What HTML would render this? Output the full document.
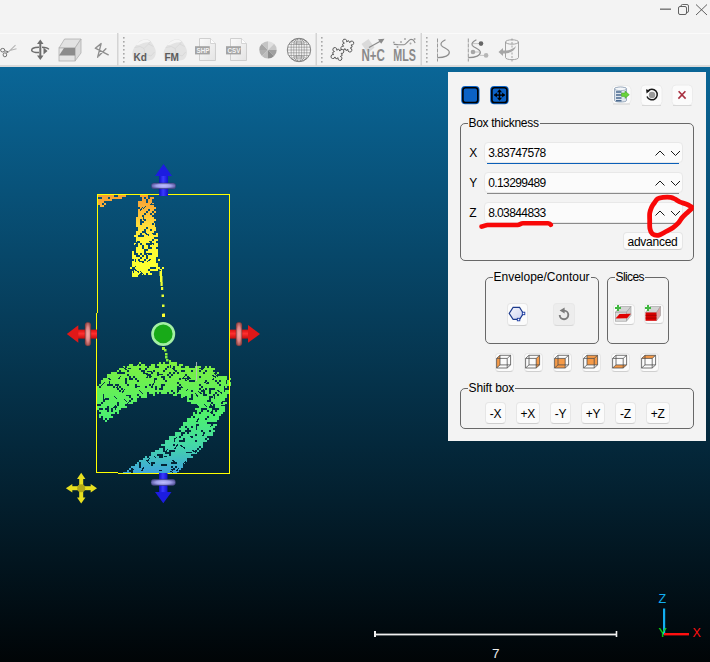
<!DOCTYPE html>
<html><head><meta charset="utf-8">
<style>
*{margin:0;padding:0;box-sizing:border-box}
html,body{width:710px;height:662px;overflow:hidden;font-family:"Liberation Sans",sans-serif;}
body{position:relative;background:#000;}
.abs{position:absolute}
#top{left:0;top:0;width:710px;height:66px;background:#f3f3f3}
#tbline{left:0;top:33px;width:710px;height:1px;background:#fafafa}
#tbbot{left:0;top:65px;width:710px;height:2px;background:#dadada}
#view{left:0;top:67px;width:710px;height:595px;background:linear-gradient(to bottom,#0a6697 0px,#000000 622px)}
.vsep{position:absolute;width:2px;top:33px;height:33px;background:#dadada;border-right:1px solid #fafafa}
.dots{position:absolute;width:2px;top:37px;height:26px;background:repeating-linear-gradient(to bottom,#a0a0a0 0 2px,transparent 2px 4px)}
#panel{left:448px;top:72px;width:258px;height:369px;background:#f3f3f3}
.gb{position:absolute;border:1px solid #686868;border-radius:5px}
.gt{position:absolute;font-size:12px;color:#000;background:#f3f3f3;padding:0 1px;line-height:14px;white-space:nowrap}
.btn{position:absolute;background:#fbfbfb;border:1px solid #e6e6e6;border-bottom-color:#cfcfcf;border-radius:4px}
.inp{position:absolute;left:35px;width:200px;height:21px;background:#fbfbfb;border:1px solid #e8e8e8;border-radius:4px}
.lbl{position:absolute;font-size:12px;color:#000;line-height:14px}
.sb{font-size:12px;color:#000;text-align:center;line-height:22.5px;letter-spacing:-0.2px}
.val{position:absolute;font-size:12px;color:#000;line-height:14px;letter-spacing:-0.45px}
</style></head>
<body>
<div id="top" class="abs"></div>
<div id="tbline" class="abs"></div>
<div id="tbbot" class="abs"></div>
<div id="view" class="abs"></div>
<svg class="abs" style="left:0;top:0" width="710" height="66" viewBox="0 0 710 66">
 <!-- window controls -->
 <rect x="660" y="8.6" width="11" height="1.1" fill="#505050"/>
 <rect x="681" y="4.5" width="7.5" height="8" rx="1.5" fill="none" stroke="#505050" stroke-width="0.85"/>
 <rect x="678.5" y="6.5" width="8" height="8" rx="1.5" fill="#f3f3f3" stroke="#505050" stroke-width="0.9"/>
 <path d="M696 4.5 L707 15 M707 4.5 L696 15" stroke="#505050" stroke-width="0.9"/>
 <!-- separators -->
 <g fill="#d4d4d4">
  <rect x="117" y="33" width="1.5" height="33"/>
  <rect x="315.5" y="33" width="1.5" height="33"/>
  <rect x="420.5" y="33" width="1.5" height="33"/>
 </g>
 <g fill="#a8a8a8">
  <rect x="123" y="37" width="1.6" height="1.6"/><rect x="123" y="41" width="1.6" height="1.6"/><rect x="123" y="45" width="1.6" height="1.6"/><rect x="123" y="49" width="1.6" height="1.6"/><rect x="123" y="53" width="1.6" height="1.6"/><rect x="123" y="57" width="1.6" height="1.6"/><rect x="123" y="61" width="1.6" height="1.6"/>
  <rect x="321" y="37" width="1.6" height="1.6"/><rect x="321" y="41" width="1.6" height="1.6"/><rect x="321" y="45" width="1.6" height="1.6"/><rect x="321" y="49" width="1.6" height="1.6"/><rect x="321" y="53" width="1.6" height="1.6"/><rect x="321" y="57" width="1.6" height="1.6"/><rect x="321" y="61" width="1.6" height="1.6"/>
  <rect x="426" y="37" width="1.6" height="1.6"/><rect x="426" y="41" width="1.6" height="1.6"/><rect x="426" y="45" width="1.6" height="1.6"/><rect x="426" y="49" width="1.6" height="1.6"/><rect x="426" y="53" width="1.6" height="1.6"/><rect x="426" y="57" width="1.6" height="1.6"/><rect x="426" y="61" width="1.6" height="1.6"/>
 </g>
 <!-- scissors -->
 <g fill="none" stroke="#6a6a6a" stroke-width="0.95">
  <ellipse cx="2.7" cy="50.2" rx="2.1" ry="1.8"/>
  <ellipse cx="4.9" cy="54.8" rx="1.8" ry="2"/>
  <path d="M4.8 50.8 L8.5 51.8 M6.2 53 L8.5 51.8"/>
 </g>
 <path d="M8.5 51.8 L15.5 45.2 M9 50.8 L16.5 48.8" stroke="#b4b4b4" stroke-width="1.1" fill="none"/>
 <!-- rotate/move -->
 <g fill="#6e6e6e">
  <rect x="39.3" y="42" width="2" height="16"/>
  <path d="M40.3 39.5 L43.5 44 L37 44 Z"/>
  <path d="M40.3 60 L43.5 55.5 L37 55.5 Z"/>
  <path d="M43.5 47.5 L47.5 51 L43.5 54.5 Z"/>
 </g>
 <path d="M39 47.3 C33 47.5 31.5 48.5 31.7 50.3 C32 52 35 52.5 39 52.5 M42 47.2 C45 47.3 48 48 48.8 49.3" fill="none" stroke="#6e6e6e" stroke-width="1.5"/>
 <!-- box -->
 <g stroke="#b0b0b0" stroke-width="0.8" fill="#dedede">
  <path d="M59 48 L64.6 39 L81 39 L75 48 Z" fill="#e2e2e2"/>
  <path d="M75 48 L81 39 L81 53 L75 61 Z" fill="#dadada"/>
  <rect x="59" y="48" width="16" height="13" fill="#e4e4e4"/>
 </g>
 <path d="M64 48 L75 48 L75 55.6 L59 55.6 Z" fill="#8c8c8c"/>
 <!-- axis icon -->
 <path d="M101.1 43.6 L97.7 57.2 M101.1 43.6 L95.3 48.2 L108.3 54.8 M105.9 48.8 L99 55.7" fill="none" stroke="#8e8e8e" stroke-width="1.4" stroke-linecap="round" stroke-linejoin="round"/>
 <!-- Kd / FM blobs -->
 <g transform="translate(0 0)">
  <path d="M132.5 52.1 C133 49.5 134 47.5 137.6 43.2 C139.5 41.2 141 40.2 142.7 39.8 C144 39.2 145 38.9 146.1 39 C148 39.2 149.3 40 150.3 41.1 C152 43 153 44.5 153.7 45.7 C155 48 155.8 50 155.8 52.1 C155.8 54.5 155.3 56 154.5 57.2 C153.7 58.5 153 59.2 152 59.7 C150.5 60.3 149 60.5 147.8 60.5 L134 60.5 C132.8 58 132.3 55 132.5 52.1 Z" fill="#e3e3e3"/>
  <path d="M136 44.5 C139 41.5 143 39.5 146 39.5 C148 39.8 149.5 40.8 150.5 42 C147 42.5 144 42 141 44 C139 45 137.5 45.5 136 44.5 Z" fill="#f5f5f5"/>
  <path d="M134.5 47.5 L140 46.5 L144 48.5 L148.5 44 L150.5 41.5 M144 48.5 L145 54 L142 57.5 M145 54 L151 56 L154.5 52 M148.5 44 L153.5 46.5" fill="none" stroke="#d2d2d2" stroke-width="0.6"/>
 </g>
 <g transform="translate(31.2 0)">
  <path d="M132.5 52.1 C133 49.5 134 47.5 137.6 43.2 C139.5 41.2 141 40.2 142.7 39.8 C144 39.2 145 38.9 146.1 39 C148 39.2 149.3 40 150.3 41.1 C152 43 153 44.5 153.7 45.7 C155 48 155.8 50 155.8 52.1 C155.8 54.5 155.3 56 154.5 57.2 C153.7 58.5 153 59.2 152 59.7 C150.5 60.3 149 60.5 147.8 60.5 L134 60.5 C132.8 58 132.3 55 132.5 52.1 Z" fill="#e3e3e3"/>
  <path d="M136 44.5 C139 41.5 143 39.5 146 39.5 C148 39.8 149.5 40.8 150.5 42 C147 42.5 144 42 141 44 C139 45 137.5 45.5 136 44.5 Z" fill="#f5f5f5"/>
  <path d="M134.5 47.5 L140 46.5 L144 48.5 L148.5 44 L150.5 41.5 M144 48.5 L145 54 L142 57.5 M145 54 L151 56 L154.5 52 M148.5 44 L153.5 46.5" fill="none" stroke="#d2d2d2" stroke-width="0.6"/>
 </g>
 <text x="133.6" y="60.8" font-family="Liberation Sans" font-weight="bold" font-size="10.6" fill="#5c5c5c" transform="translate(133.6 0) scale(0.95 1) translate(-133.6 0)">Kd</text>
 <text x="164.4" y="60.8" font-family="Liberation Sans" font-weight="bold" font-size="10.6" fill="#5c5c5c" transform="translate(164.4 0) scale(0.95 1) translate(-164.4 0)">FM</text>
 <!-- SHP / CSV -->
 <defs><linearGradient id="docg" x1="0" y1="0" x2="1" y2="1"><stop offset="0" stop-color="#fafafa"/><stop offset="1" stop-color="#e4e4e4"/></linearGradient></defs>
 <g>
  <path d="M199.5 38.5 L210.5 38.5 L215.5 43.5 L215.5 60.5 L199.5 60.5 Z" fill="url(#docg)" stroke="#cbcbcb" stroke-width="0.9"/>
  <path d="M210.5 38.5 L210.5 43.5 L215.5 43.5" fill="#fdfdfd" stroke="#cbcbcb" stroke-width="0.8"/>
  <rect x="195" y="46.2" width="14.8" height="8.2" fill="#a4a4a4"/>
  <text x="196.6" y="53" font-family="Liberation Sans" font-weight="bold" font-size="6.8" fill="#f4f4f4" transform="translate(196.6 0) scale(0.92 1) translate(-196.6 0)">SHP</text>
  <path d="M230.5 38.5 L241.5 38.5 L246.5 43.5 L246.5 60.5 L230.5 60.5 Z" fill="url(#docg)" stroke="#cbcbcb" stroke-width="0.9"/>
  <path d="M241.5 38.5 L241.5 43.5 L246.5 43.5" fill="#fdfdfd" stroke="#cbcbcb" stroke-width="0.8"/>
  <rect x="226" y="46.2" width="15" height="8.2" fill="#a4a4a4"/>
  <text x="227.6" y="53" font-family="Liberation Sans" font-weight="bold" font-size="6.8" fill="#f4f4f4" transform="translate(227.6 0) scale(0.92 1) translate(-227.6 0)">CSV</text>
 </g>
 <!-- disc -->
 <g transform="translate(268 49.9)">
  <path d="M0 0 L0 -8.7 A8.7 8.7 0 0 1 6.15 -6.15 Z" fill="#e0e0e0"/>
  <path d="M0 0 L6.15 -6.15 A8.7 8.7 0 0 1 8.7 0 Z" fill="#c8c8c8"/>
  <path d="M0 0 L8.7 0 A8.7 8.7 0 0 1 6.15 6.15 Z" fill="#a0a0a0"/>
  <path d="M0 0 L6.15 6.15 A8.7 8.7 0 0 1 0 8.7 Z" fill="#8e8e8e"/>
  <path d="M0 0 L0 8.7 A8.7 8.7 0 0 1 -6.15 6.15 Z" fill="#bdbdbd"/>
  <path d="M0 0 L-6.15 6.15 A8.7 8.7 0 0 1 -8.7 0 Z" fill="#b0b0b0"/>
  <path d="M0 0 L-8.7 0 A8.7 8.7 0 0 1 -6.15 -6.15 Z" fill="#a6a6a6"/>
  <path d="M0 0 L-6.15 -6.15 A8.7 8.7 0 0 1 0 -8.7 Z" fill="#c4c4c4"/>
 </g>
 <!-- globe -->
 <defs><clipPath id="gclip"><circle cx="0" cy="0" r="11.7"/></clipPath></defs>
 <g transform="translate(299 50)" fill="none" stroke="#606060">
  <g clip-path="url(#gclip)" stroke-width="0.42"><path d="M-10.33 -5.5L10.33 -5.5M-11.36 -2.8L11.36 -2.8M-11.70 0L11.70 0M-11.36 2.8L11.36 2.8M-10.33 5.5L10.33 5.5M-7.8 -5.5L-7.8 5.5M-5.2 -5.5L-5.2 5.5M-2.6 -5.5L-2.6 5.5M0 -5.5L0 5.5M2.6 -5.5L2.6 5.5M5.2 -5.5L5.2 5.5M7.8 -5.5L7.8 5.5M-2.4 -11.7A2.4 1.8 0 0 0 2.4 -11.7M-2.4 11.7A2.4 1.8 0 0 1 2.4 11.7M-4.4 -11.7A4.4 3.4 0 0 0 4.4 -11.7M-4.4 11.7A4.4 3.4 0 0 1 4.4 11.7M-6.6 -11.7A6.6 4.6 0 0 0 6.6 -11.7M-6.6 11.7A6.6 4.6 0 0 1 6.6 11.7M-8.8 -11.7A8.8 5.8 0 0 0 8.8 -11.7M-8.8 11.7A8.8 5.8 0 0 1 8.8 11.7M-7.8 -5.5Q-8.58 -9 -2.34 -11.7M-7.8 5.5Q-8.58 9 -2.34 11.7M-5.2 -5.5Q-5.72 -9 -1.56 -11.7M-5.2 5.5Q-5.72 9 -1.56 11.7M-2.6 -5.5Q-2.86 -9 -0.78 -11.7M-2.6 5.5Q-2.86 9 -0.78 11.7M2.6 -5.5Q2.86 -9 0.78 -11.7M2.6 5.5Q2.86 9 0.78 11.7M5.2 -5.5Q5.72 -9 1.56 -11.7M5.2 5.5Q5.72 9 1.56 11.7M7.8 -5.5Q8.58 -9 2.34 -11.7M7.8 5.5Q8.58 9 2.34 11.7"/></g>
  <circle r="11.7" stroke-width="0.75"/>
 </g>
 <!-- puzzle -->
 <g fill="#f3f3f3" stroke="#505050" stroke-width="0.85">
  <path d="M-3.6 -3.6 L-1.3 -3.6 A2.0 2.0 0 1 1 1.3 -3.6 L3.6 -3.6 L3.6 -1.3 A2.0 2.0 0 1 1 3.6 1.3 L3.6 3.6 L1.3 3.6 A2.0 2.0 0 1 1 -1.3 3.6 L-3.6 3.6 L-3.6 1.3 A2.0 2.0 0 1 1 -3.6 -1.3 Z" transform="translate(347.3 45.6) rotate(-30)"/>
  <path d="M-3.6 -3.6 L-1.3 -3.6 A2.0 2.0 0 1 1 1.3 -3.6 L3.6 -3.6 L3.6 -1.3 A2.0 2.0 0 1 1 3.6 1.3 L3.6 3.6 L1.3 3.6 A2.0 2.0 0 1 1 -1.3 3.6 L-3.6 3.6 L-3.6 1.3 A2.0 2.0 0 1 1 -3.6 -1.3 Z" transform="translate(337.4 54) rotate(-30)"/>
 </g>
 <!-- N+C -->
 <path d="M361.5 44 L368.5 39 L374.5 47.5 L368 53 Z" fill="#dadada"/>
 <path d="M369 47.5 L382.5 40" stroke="#8a8a8a" stroke-width="1.2"/>
 <path d="M384.5 38.8 L378 39.2 L381.2 43.8 Z" fill="#8a8a8a"/>
 <text x="361.5" y="61.2" font-family="Liberation Sans" font-weight="bold" font-size="16.5" fill="#8a8a8a" transform="translate(361.5 0) scale(0.70 1) translate(-361.5 0)">N+C</text>
 <!-- MLS -->
 <path d="M393.8 44.5 C396 44 397.5 45 399.3 44.8 C401.5 44.6 403 45 404.7 44.4 C406.5 43.5 407.2 42 408.3 41.2 C409.5 40 410 39.4 411 39.4 C412.5 39.4 413.5 40 414 41 C414.5 42 414.8 42.5 415.2 43" fill="none" stroke="#8c8c8c" stroke-width="1.1"/>
 <g fill="#a8a8a8"><circle cx="393.9" cy="42.6" r="1"/><circle cx="397.5" cy="47" r="1"/><circle cx="401" cy="42.1" r="1"/><circle cx="405" cy="38.9" r="1"/><circle cx="410.5" cy="43.5" r="1"/><circle cx="414.6" cy="38.9" r="1"/></g>
 <text x="393.3" y="61.2" font-family="Liberation Sans" font-weight="bold" font-size="16.5" fill="#8a8a8a" transform="translate(393.3 0) scale(0.65 1) translate(-393.3 0)">MLS</text>
 <!-- S curve icon 1 -->
 <path d="M437.5 38.5 L437.5 61.5" stroke="#9a9a9a" stroke-width="1" stroke-dasharray="4 1"/>
 <path d="M445.5 39.8 C442 41.5 440.2 43 441.2 45.2 C442.8 47.8 449 48.8 449.3 52 C449.5 55.5 445 57.6 437.5 57.6" fill="none" stroke="#8e8e8e" stroke-width="1.2"/>
 <!-- S curve icon 2 -->
 <path d="M468.3 38.5 L468.3 61.5" stroke="#9a9a9a" stroke-width="1" stroke-dasharray="4 1"/>
 <path d="M476.4 39.8 C473 41.5 471.2 43 472.2 45.2 C473.8 47.8 480 48.8 480.3 52 C480.5 55.5 476 57.6 468.3 57.6" fill="none" stroke="#8e8e8e" stroke-width="1.2"/>
 <path d="M473 43.6 L481 43.6 M473 52 L480 52 M480 55.4 L486 55.4" stroke="#b0b0b0" stroke-width="0.7"/>
 <circle cx="481" cy="43.6" r="2.3" fill="#666"/>
 <circle cx="473" cy="52" r="2.3" fill="#a6a6a6"/>
 <circle cx="486.1" cy="55.4" r="2.3" fill="#b6b6b6"/>
 <!-- cylinder with arrow -->
 <g fill="none" stroke="#9a9a9a" stroke-width="0.9">
  <ellipse cx="512" cy="42" rx="6.5" ry="2.2"/>
  <path d="M505.5 42 L505.5 57.5 M518.5 42 L518.5 57.5"/>
  <path d="M505.5 57.5 A6.5 2.2 0 0 0 518.5 57.5"/>
  <path d="M512 38.5 L512 61.5" stroke-dasharray="2 1.5"/>
 </g>
 <path d="M498.5 52 L503 48 L503 50.5 C508 50.5 512 50 516 46 C515 51 510 53.5 503 53.5 L503 56 Z" fill="#a6a6a6"/>
</svg>


<!-- CLOUD -->
<svg class="abs" style="left:0;top:67px" width="710" height="595" viewBox="0 67 710 595">
<defs>
<linearGradient id="cm" gradientUnits="userSpaceOnUse" x1="0" y1="195" x2="0" y2="473">
<stop offset="0" stop-color="#f5a032"/>
<stop offset="0.04" stop-color="#fcb038"/>
<stop offset="0.1" stop-color="#ffd83a"/>
<stop offset="0.17" stop-color="#fff838"/>
<stop offset="0.24" stop-color="#ffff30"/>
<stop offset="0.45" stop-color="#d8ff38"/>
<stop offset="0.6" stop-color="#7ef03e"/>
<stop offset="0.8" stop-color="#4cf070"/>
<stop offset="0.9" stop-color="#44d8a8"/>
<stop offset="1" stop-color="#3fa4dc"/>
</linearGradient>
</defs>
<linearGradient id="bgv" gradientUnits="userSpaceOnUse" x1="0" y1="67" x2="0" y2="689"><stop offset="0" stop-color="#0a6697"/><stop offset="1" stop-color="#000"/></linearGradient>
<path fill="url(#cm)" d="M98 195h16v2h-16zM118 195h8v2h-8zM102 197h6v2h-6zM110 197h12v2h-12zM98 199h14v2h-14zM98 201h6v2h-6zM98 203h4v2h-4zM104 203h2v2h-2zM100 205h4v2h-4zM140 195h8v2h-8zM142 197h2v2h-2zM146 197h2v2h-2zM150 197h4v2h-4zM142 199h4v2h-4zM148 199h4v2h-4zM138 201h8v2h-8zM148 201h4v2h-4zM138 203h16v2h-16zM138 205h16v2h-16zM140 207h16v2h-16zM138 209h10v2h-10zM150 209h4v2h-4zM138 211h8v2h-8zM148 211h4v2h-4zM154 211h2v2h-2zM138 213h6v2h-6zM146 213h4v2h-4zM152 213h2v2h-2zM138 215h4v2h-4zM144 215h8v2h-8zM136 217h18v2h-18zM136 219h4v2h-4zM142 219h2v2h-2zM146 219h10v2h-10zM136 221h4v2h-4zM144 221h10v2h-10zM136 223h4v2h-4zM142 223h10v2h-10zM154 223h2v2h-2zM136 225h20v2h-20zM138 227h8v2h-8zM148 227h8v2h-8zM138 229h6v2h-6zM146 229h4v2h-4zM152 229h4v2h-4zM136 231h6v2h-6zM146 231h8v2h-8zM136 233h4v2h-4zM142 233h12v2h-12zM156 233h2v2h-2zM134 235h4v2h-4zM144 235h14v2h-14zM136 237h18v2h-18zM136 239h16v2h-16zM154 239h4v2h-4zM136 241h2v2h-2zM140 241h10v2h-10zM152 241h4v2h-4zM134 243h2v2h-2zM138 243h2v2h-2zM142 243h4v2h-4zM152 243h6v2h-6zM138 245h4v2h-4zM144 245h4v2h-4zM150 245h8v2h-8zM136 247h6v2h-6zM144 247h4v2h-4zM152 247h4v2h-4zM136 249h8v2h-8zM148 249h10v2h-10zM132 251h2v2h-2zM136 251h8v2h-8zM146 251h12v2h-12zM132 253h2v2h-2zM138 253h2v2h-2zM142 253h2v2h-2zM146 253h2v2h-2zM152 253h6v2h-6zM132 255h4v2h-4zM140 255h2v2h-2zM144 255h2v2h-2zM148 255h10v2h-10zM132 257h8v2h-8zM142 257h4v2h-4zM148 257h8v2h-8zM134 259h4v2h-4zM140 259h4v2h-4zM146 259h10v2h-10zM158 259h2v2h-2zM132 261h10v2h-10zM144 261h12v2h-12zM132 263h26v2h-26zM132 265h26v2h-26zM130 267h2v2h-2zM134 267h16v2h-16zM156 267h4v2h-4zM162 267h2v2h-2zM134 269h14v2h-14zM150 269h8v2h-8zM132 271h18v2h-18zM132 273h8v2h-8zM142 273h4v2h-4zM148 273h4v2h-4zM132 275h6v2h-6zM159.5 269h2.5v7h-2.5z M160 276h2.5v6h-2.5z M160.5 282h2.2v4h-2.2z M161 287h2.2v3h-2.2z M161.5 294.5h2.5v2.5h-2.5z M162 304.5h2.5v2.5h-2.5z M162.5 313.5h2.5v2.5h-2.5zM169 360h2v2h-2zM139 362h2v2h-2zM159 362h2v2h-2zM163 362h2v2h-2zM169 362h8v2h-8zM129 364h4v2h-4zM137 364h2v2h-2zM141 364h4v2h-4zM151 364h4v2h-4zM157 364h20v2h-20zM179 364h4v2h-4zM123 366h2v2h-2zM127 366h20v2h-20zM149 366h6v2h-6zM159 366h8v2h-8zM169 366h4v2h-4zM175 366h6v2h-6zM185 366h4v2h-4zM195 366h6v2h-6zM205 366h2v2h-2zM209 366h2v2h-2zM119 368h20v2h-20zM141 368h4v2h-4zM147 368h18v2h-18zM167 368h6v2h-6zM175 368h26v2h-26zM203 368h12v2h-12zM117 370h2v2h-2zM121 370h6v2h-6zM129 370h12v2h-12zM145 370h8v2h-8zM155 370h8v2h-8zM165 370h10v2h-10zM177 370h4v2h-4zM185 370h6v2h-6zM193 370h6v2h-6zM201 370h4v2h-4zM207 370h6v2h-6zM111 372h6v2h-6zM125 372h18v2h-18zM145 372h6v2h-6zM153 372h4v2h-4zM159 372h10v2h-10zM171 372h2v2h-2zM175 372h2v2h-2zM179 372h24v2h-24zM205 372h10v2h-10zM217 372h2v2h-2zM107 374h20v2h-20zM129 374h20v2h-20zM151 374h6v2h-6zM159 374h8v2h-8zM169 374h2v2h-2zM173 374h12v2h-12zM187 374h30v2h-30zM107 376h22v2h-22zM131 376h2v2h-2zM135 376h14v2h-14zM151 376h10v2h-10zM165 376h4v2h-4zM171 376h16v2h-16zM189 376h10v2h-10zM201 376h26v2h-26zM103 378h22v2h-22zM127 378h2v2h-2zM133 378h2v2h-2zM137 378h18v2h-18zM157 378h6v2h-6zM165 378h14v2h-14zM181 378h6v2h-6zM189 378h38v2h-38zM229 378h2v2h-2zM101 380h24v2h-24zM127 380h10v2h-10zM139 380h26v2h-26zM167 380h22v2h-22zM195 380h10v2h-10zM207 380h8v2h-8zM217 380h2v2h-2zM221 380h8v2h-8zM101 382h24v2h-24zM127 382h50v2h-50zM179 382h28v2h-28zM209 382h8v2h-8zM219 382h12v2h-12zM99 384h8v2h-8zM113 384h2v2h-2zM119 384h8v2h-8zM129 384h6v2h-6zM137 384h12v2h-12zM151 384h10v2h-10zM165 384h14v2h-14zM181 384h18v2h-18zM201 384h18v2h-18zM221 384h10v2h-10zM97 386h2v2h-2zM101 386h12v2h-12zM115 386h4v2h-4zM121 386h14v2h-14zM137 386h8v2h-8zM147 386h4v2h-4zM153 386h2v2h-2zM157 386h4v2h-4zM163 386h14v2h-14zM179 386h22v2h-22zM203 386h24v2h-24zM97 388h20v2h-20zM119 388h2v2h-2zM123 388h32v2h-32zM157 388h2v2h-2zM163 388h14v2h-14zM181 388h18v2h-18zM201 388h4v2h-4zM207 388h2v2h-2zM215 388h10v2h-10zM97 390h22v2h-22zM121 390h50v2h-50zM173 390h4v2h-4zM179 390h12v2h-12zM193 390h8v2h-8zM205 390h4v2h-4zM211 390h18v2h-18zM97 392h50v2h-50zM149 392h6v2h-6zM157 392h2v2h-2zM161 392h6v2h-6zM169 392h4v2h-4zM175 392h28v2h-28zM205 392h4v2h-4zM211 392h4v2h-4zM217 392h12v2h-12zM97 394h40v2h-40zM139 394h8v2h-8zM153 394h2v2h-2zM173 394h4v2h-4zM181 394h10v2h-10zM193 394h10v2h-10zM207 394h6v2h-6zM215 394h2v2h-2zM219 394h8v2h-8zM97 396h32v2h-32zM131 396h8v2h-8zM141 396h6v2h-6zM181 396h4v2h-4zM187 396h4v2h-4zM193 396h16v2h-16zM213 396h14v2h-14zM97 398h8v2h-8zM109 398h22v2h-22zM133 398h4v2h-4zM187 398h2v2h-2zM193 398h16v2h-16zM211 398h14v2h-14zM97 400h6v2h-6zM105 400h24v2h-24zM131 400h6v2h-6zM187 400h20v2h-20zM211 400h14v2h-14zM97 402h4v2h-4zM103 402h14v2h-14zM119 402h14v2h-14zM191 402h20v2h-20zM213 402h8v2h-8zM223 402h4v2h-4zM101 404h16v2h-16zM119 404h6v2h-6zM197 404h16v2h-16zM215 404h10v2h-10zM97 406h10v2h-10zM109 406h6v2h-6zM117 406h10v2h-10zM199 406h10v2h-10zM215 406h10v2h-10zM97 408h2v2h-2zM103 408h2v2h-2zM109 408h2v2h-2zM113 408h8v2h-8zM195 408h6v2h-6zM207 408h6v2h-6zM219 408h6v2h-6zM99 410h8v2h-8zM109 410h2v2h-2zM113 410h6v2h-6zM197 410h4v2h-4zM203 410h4v2h-4zM209 410h6v2h-6zM217 410h8v2h-8zM101 412h14v2h-14zM117 412h2v2h-2zM193 412h2v2h-2zM197 412h2v2h-2zM201 412h10v2h-10zM213 412h10v2h-10zM99 414h12v2h-12zM193 414h20v2h-20zM215 414h6v2h-6zM99 416h2v2h-2zM103 416h10v2h-10zM191 416h2v2h-2zM195 416h12v2h-12zM209 416h10v2h-10zM103 418h2v2h-2zM107 418h2v2h-2zM187 418h18v2h-18zM207 418h12v2h-12zM105 420h2v2h-2zM187 420h30v2h-30zM183 422h24v2h-24zM183 424h14v2h-14zM199 424h12v2h-12zM213 424h4v2h-4zM181 426h4v2h-4zM187 426h4v2h-4zM193 426h22v2h-22zM179 428h8v2h-8zM189 428h24v2h-24zM181 430h4v2h-4zM191 430h10v2h-10zM203 430h6v2h-6zM211 430h4v2h-4zM175 432h6v2h-6zM185 432h2v2h-2zM189 432h14v2h-14zM205 432h8v2h-8zM175 434h6v2h-6zM183 434h12v2h-12zM197 434h16v2h-16zM169 436h10v2h-10zM181 436h10v2h-10zM193 436h14v2h-14zM169 438h14v2h-14zM185 438h20v2h-20zM207 438h2v2h-2zM165 440h14v2h-14zM185 440h10v2h-10zM197 440h10v2h-10zM165 442h38v2h-38zM161 444h12v2h-12zM175 444h28v2h-28zM165 446h34v2h-34zM201 446h2v2h-2zM159 448h4v2h-4zM165 448h32v2h-32zM199 448h2v2h-2zM155 450h8v2h-8zM165 450h4v2h-4zM175 450h20v2h-20zM197 450h2v2h-2zM151 452h14v2h-14zM171 452h26v2h-26zM151 454h6v2h-6zM163 454h6v2h-6zM171 454h20v2h-20zM145 456h2v2h-2zM149 456h10v2h-10zM163 456h30v2h-30zM143 458h44v2h-44zM139 460h48v2h-48zM137 462h2v2h-2zM141 462h10v2h-10zM155 462h16v2h-16zM177 462h8v2h-8zM135 464h4v2h-4zM141 464h10v2h-10zM153 464h8v2h-8zM167 464h16v2h-16zM131 466h8v2h-8zM141 466h30v2h-30zM173 466h2v2h-2zM177 466h6v2h-6zM129 468h2v2h-2zM133 468h40v2h-40zM175 468h6v2h-6zM127 470h2v2h-2zM133 470h46v2h-46zM123 472h8v2h-8zM133 472h44v2h-44zM164 349h2.5v2.5h-2.5zM165 353h2.5v2.5h-2.5zM165 356h2.5v2.5h-2.5zM166 359h2.5v2.5h-2.5z"/>
<path fill="none" stroke="url(#bgv)" stroke-width="1.1" shape-rendering="crispEdges" d="M177.5 364.5L179.5 366.5M185.5 391.5L187.5 389.5M202.5 436.5L204.5 432.5M170.5 471.5L173.5 472.5M212.5 375.5L216.5 377.5M154.5 377.5L154.5 382.5M124.5 399.5L127.5 402.5M190.5 399.5L191.5 396.5M210.5 427.5L211.5 424.5M109.5 380.5L109.5 383.5M209.5 413.5L211.5 411.5M123.5 367.5L127.5 370.5M204.5 382.5L207.5 383.5M163.5 456.5L166.5 456.5M139.5 390.5L143.5 394.5M151.5 388.5L153.5 383.5M196.5 422.5L198.5 418.5M102.5 401.5L104.5 399.5M116.5 388.5L118.5 385.5M182.5 378.5L185.5 375.5M178.5 387.5L181.5 387.5M182.5 397.5L186.5 397.5M114.5 396.5L117.5 399.5M188.5 377.5L191.5 379.5M198.5 391.5L202.5 394.5M115.5 404.5L115.5 409.5M177.5 387.5L177.5 392.5M195.5 393.5L198.5 397.5M131.5 471.5L133.5 469.5M170.5 364.5L170.5 367.5M197.5 404.5L197.5 407.5M196.5 423.5L196.5 429.5M172.5 368.5L175.5 371.5M214.5 373.5L218.5 377.5M146.5 371.5L151.5 371.5M154.5 456.5L156.5 458.5M212.5 380.5L213.5 378.5M158.5 470.5L161.5 470.5M113.5 408.5L115.5 405.5M108.5 378.5L111.5 380.5M126.5 404.5L130.5 400.5M146.5 460.5L150.5 464.5M146.5 378.5L148.5 374.5M185.5 452.5L191.5 452.5M157.5 374.5L162.5 374.5M121.5 393.5L124.5 389.5M226.5 379.5L226.5 383.5M150.5 375.5L152.5 377.5M185.5 379.5L186.5 381.5M212.5 407.5L212.5 413.5M127.5 368.5L130.5 368.5M172.5 460.5L175.5 462.5M180.5 445.5L185.5 448.5M198.5 368.5L203.5 368.5M134.5 364.5L137.5 364.5M125.5 395.5L130.5 395.5M147.5 372.5L147.5 376.5M100.5 386.5L104.5 382.5M214.5 394.5L214.5 398.5M192.5 450.5L196.5 452.5M201.5 408.5L201.5 411.5M174.5 437.5L174.5 441.5M210.5 404.5L212.5 407.5M220.5 405.5L226.5 405.5M181.5 378.5L186.5 378.5M171.5 469.5L173.5 470.5M147.5 461.5L149.5 458.5M160.5 390.5L162.5 387.5M176.5 471.5L178.5 468.5M173.5 440.5L176.5 437.5M181.5 386.5L183.5 388.5M217.5 390.5L222.5 393.5M118.5 379.5L120.5 376.5M145.5 373.5L148.5 375.5M221.5 401.5L226.5 401.5M204.5 404.5L207.5 407.5M135.5 386.5L139.5 386.5M224.5 385.5L224.5 391.5M203.5 388.5L203.5 393.5M103.5 393.5L103.5 399.5M174.5 449.5L177.5 444.5M141.5 471.5L143.5 467.5M189.5 436.5L192.5 436.5M182.5 464.5L185.5 461.5M165.5 452.5L167.5 449.5M139.5 273.5L139.5 276.5M143.5 214.5L143.5 219.5M134.5 269.5L139.5 272.5M149.5 204.5L153.5 204.5M145.5 233.5L149.5 235.5M139.5 211.5L142.5 207.5M138.5 261.5L143.5 261.5M135.5 258.5L135.5 261.5M135.5 245.5L137.5 241.5M142.5 209.5L145.5 206.5M149.5 241.5L154.5 244.5M147.5 261.5L151.5 258.5M133.5 269.5L135.5 266.5M146.5 252.5L146.5 257.5M140.5 271.5L144.5 275.5M155.5 221.5L155.5 226.5M133.5 267.5L133.5 272.5M152.5 233.5L155.5 235.5M149.5 205.5L151.5 203.5M159.5 266.5L162.5 268.5M157.5 270.5L160.5 270.5M147.5 253.5L150.5 254.5"/>
</svg>
<!-- /CLOUD -->
<svg class="abs" style="left:0;top:67px" width="710" height="595" viewBox="0 67 710 595">
 <defs>
  <linearGradient id="shaftB" x1="0" x2="1" y1="0" y2="0">
   <stop offset="0" stop-color="#1010c8"/><stop offset="0.45" stop-color="#3a3aff"/><stop offset="1" stop-color="#1212d0"/>
  </linearGradient>
  <radialGradient id="ringB" cx="0.5" cy="0.5" r="0.5">
   <stop offset="0" stop-color="#c0c0ff"/><stop offset="0.6" stop-color="#a0a0ea"/><stop offset="1" stop-color="#6060a8"/>
  </radialGradient>
  <linearGradient id="shaftR" x1="0" x2="0" y1="0" y2="1">
   <stop offset="0" stop-color="#d81010"/><stop offset="0.45" stop-color="#ff3030"/><stop offset="1" stop-color="#c80c0c"/>
  </linearGradient>
  <radialGradient id="ringR" cx="0.5" cy="0.5" r="0.5" fx="0.5" fy="0.5" gradientTransform="translate(0.5 0.5) scale(1 1) translate(-0.5 -0.5)">
   <stop offset="0" stop-color="#f6aaaa"/><stop offset="0.6" stop-color="#e08888"/><stop offset="1" stop-color="#a05050"/>
  </radialGradient>
 </defs>
 <!-- yellow box -->
 <g fill="#ffff00">
  <rect x="97" y="194" width="133" height="1"/>
  <rect x="97" y="194" width="1" height="119"/>
  <rect x="96" y="313" width="1" height="160"/>
  <rect x="229" y="194" width="1" height="280"/>
  <rect x="96" y="472" width="22" height="1"/>
  <rect x="118" y="473" width="112" height="1"/>
 </g>
 <rect x="196" y="362" width="1" height="19" fill="#b8c0c0" opacity="0.85"/>
 <!-- blue up arrow -->
 <rect x="159.2" y="175.5" width="8.8" height="20.5" fill="url(#shaftB)"/>
 <path d="M163.5 164 L172 176 L155 176 Z" fill="#1c1ce0"/>
 <rect x="151.3" y="183" width="24.5" height="5.7" rx="2.8" fill="url(#ringB)" stroke="#303060" stroke-width="0.4"/>
 <!-- blue down arrow -->
 <rect x="159" y="473" width="8.5" height="19.5" fill="url(#shaftB)"/>
 <path d="M163.3 503.2 L171.5 492 L155 492 Z" fill="#1c1ce0"/>
 <rect x="151" y="479.3" width="24.5" height="6.2" rx="3" fill="url(#ringB)" stroke="#303060" stroke-width="0.4"/>
 <!-- red left arrow -->
 <rect x="78" y="329.6" width="19" height="9" fill="url(#shaftR)"/>
 <path d="M66.8 334 L78.3 325.2 L78.3 342.8 Z" fill="#e01818"/>
 <rect x="85" y="322.2" width="5.8" height="23.7" rx="2.9" fill="url(#ringR)" stroke="#6a2a2a" stroke-width="0.4"/>
 <!-- red right arrow -->
 <rect x="230" y="329.6" width="18.5" height="9" fill="url(#shaftR)"/>
 <path d="M260 334 L248 325 L248 342.8 Z" fill="#e01818"/>
 <rect x="236" y="322.2" width="6" height="23.7" rx="3" fill="url(#ringR)" stroke="#6a2a2a" stroke-width="0.4"/>
 <!-- green ball -->
 <circle cx="163.2" cy="333.9" r="10.7" fill="#18aa18" stroke="#a4f0a4" stroke-width="2.6"/>
 <rect x="162" y="347" width="3" height="3" fill="#a8f040"/>
 <rect x="162" y="314" width="3" height="3" fill="#ffff30"/>
 <!-- yellow 4-way -->
 <g fill="#e8e020">
  <rect x="79.2" y="478" width="4" height="20.5"/>
  <rect x="71.5" y="486.2" width="20" height="4"/>
  <path d="M81.2 472.8 L85.4 479 L77 479 Z"/>
  <path d="M81.2 503.4 L85.4 497.5 L77 497.5 Z"/>
  <path d="M65.9 488.2 L72.3 484 L72.3 492.4 Z"/>
  <path d="M97 488.2 L90.7 484 L90.7 492.4 Z"/>
 </g>
 <circle cx="81.2" cy="488.2" r="4" fill="#b0a818"/>
 <!-- scale bar -->
 <rect x="374.5" y="633.6" width="242.5" height="1.8" fill="#f0f0f0"/>
 <rect x="374" y="631" width="2" height="6" fill="#f0f0f0"/>
 <rect x="615.7" y="631" width="1.6" height="6" fill="#f0f0f0"/>
 <text x="492" y="657.5" font-family="Liberation Sans" font-size="13.5" fill="#eeeeee">7</text>
 <!-- axes -->
 <rect x="663" y="608.5" width="2.2" height="26" fill="#12aef0"/>
 <rect x="664" y="633" width="25" height="2.4" fill="#ff1010"/>
 <text x="658.6" y="603.4" font-family="Liberation Sans" font-size="12.5" fill="#12aef0">Z</text>
 <text x="658.6" y="637.2" font-family="Liberation Sans" font-size="12.5" fill="#10e010">Y</text>
 <text x="692.6" y="637.2" font-family="Liberation Sans" font-size="12.5" fill="#ff1010">X</text>
</svg>

<!-- panel -->
<div id="panel" class="abs"></div>
<!-- top icon buttons -->
<svg class="abs" style="left:448px;top:72px" width="258" height="40" viewBox="448 72 258 40">
 <rect x="461.2" y="86" width="18.3" height="18.2" rx="4" fill="#0b62c6"/>
 <rect x="462.9" y="87.7" width="14.9" height="14.8" rx="2.6" fill="#0b62c6" stroke="#000" stroke-width="1.6"/>
 <rect x="490.2" y="86" width="18.5" height="18.2" rx="4" fill="#0b62c6"/>
 <rect x="491.9" y="87.7" width="15.1" height="14.8" rx="2.6" fill="#0b62c6" stroke="#000" stroke-width="1.6"/>
 <g fill="#000">
  <rect x="494.5" y="94.4" width="10" height="1.4"/><rect x="498.8" y="90" width="1.4" height="10"/>
  <path d="M499.5 89.2 L502 92.2 L497 92.2 Z"/><path d="M499.5 100.8 L502 97.8 L497 97.8 Z"/>
  <path d="M493.8 95.1 L496.8 92.6 L496.8 97.6 Z"/><path d="M505.2 95.1 L502.2 92.6 L502.2 97.6 Z"/>
 </g>
 <!-- btn3 -->
 <rect x="612" y="85.5" width="19" height="18.5" rx="4" fill="#fbfbfb" stroke="#ececec"/>
 <path d="M613 104 L630 104" stroke="#d4d4d4" stroke-width="1"/>
 <g>
  <path d="M614.5 88.8 C614.5 86.8 626.5 86.8 626.5 88.8 L626.5 100.5 C626.5 102.5 614.5 102.5 614.5 100.5 Z" fill="#dfe6ee" stroke="#7a8ea6" stroke-width="0.7"/>
  <ellipse cx="620.5" cy="88.8" rx="6" ry="1.8" fill="#f4f7fa" stroke="#7a8ea6" stroke-width="0.6"/>
  <path d="M616 92 L621.5 92 M616 95 L621.5 95 M616 98 L621.5 98 M616 100.8 L621.5 100.8" stroke="#4a6a90" stroke-width="1.6"/>
  <path d="M621.5 93 L625 93 L625 91 L629.3 94.7 L625 98.4 L625 96.4 L621.5 96.4 Z" fill="#6ad43a" stroke="#3a9a22" stroke-width="0.5"/>
 </g>
 <!-- btn4 -->
 <rect x="641" y="85" width="21" height="20.5" rx="4" fill="#fbfbfb" stroke="#ececec"/>
 <path d="M642 105.5 L661 105.5" stroke="#d8d8d8" stroke-width="1"/>
 <circle cx="652" cy="95" r="3.2" fill="#9a9a9a"/>
 <path d="M647.8 91.2 A5.3 5.3 0 1 1 647 96.5" fill="none" stroke="#1a1a1a" stroke-width="1.5"/>
 <path d="M646 89.3 L650.2 90.6 L646.6 93.6 Z" fill="#1a1a1a"/>
 <!-- btn5 -->
 <rect x="672" y="85" width="20.5" height="20.5" rx="4" fill="#fbfbfb" stroke="#ececec"/>
 <path d="M673 105.5 L691.5 105.5" stroke="#d8d8d8" stroke-width="1"/>
 <path d="M678.6 91.3 L685.6 98.6 M685.4 91.3 L678.4 98.6" stroke="#a83040" stroke-width="1.6"/>
</svg>

<!-- Box thickness group -->
<div class="gb" style="left:460.2px;top:122.5px;width:233.8px;height:138.5px"></div>
<div class="gt" style="left:467.5px;top:115.8px;letter-spacing:-0.3px">Box thickness</div>

<div class="inp" style="left:483.5px;top:141.5px;width:199.5px;height:21px"></div>
<div class="abs" style="left:487px;top:162.8px;width:192px;height:1.5px;background:#0a5fb8"></div>
<div class="inp" style="left:483.5px;top:171.5px;width:199.5px;height:21px"></div>
<div class="abs" style="left:487px;top:192.8px;width:192px;height:1px;background:#8a8a8a"></div>
<div class="inp" style="left:483.5px;top:201.5px;width:199.5px;height:21px"></div>
<div class="abs" style="left:487px;top:222.8px;width:192px;height:1px;background:#8a8a8a"></div>

<div class="lbl" style="left:469.3px;top:146px">X</div>
<div class="lbl" style="left:469.3px;top:176px">Y</div>
<div class="lbl" style="left:469.3px;top:206px">Z</div>
<div class="val" style="left:488.2px;top:146px;letter-spacing:-0.59px">3.83747578</div>
<div class="val" style="left:488.2px;top:176px;letter-spacing:-0.59px">0.13299489</div>
<div class="val" style="left:488.2px;top:206px;letter-spacing:-0.59px">8.03844833</div>
<svg class="abs" style="left:648px;top:140px" width="40" height="90" viewBox="648 140 40 90">
 <g fill="none" stroke="#1a1a1a" stroke-width="1">
  <path d="M655.5 155.5 L660 151 L664.5 155.5 M671 151 L675.5 155.5 L680 151"/>
  <path d="M655.5 185.5 L660 181 L664.5 185.5 M671 181 L675.5 185.5 L680 181"/>
  <path d="M655.5 215.5 L660 211 L664.5 215.5 M671 211 L675.5 215.5 L680 211"/>
 </g>
</svg>
<div class="btn" style="left:623px;top:232px;width:59.5px;height:18px"></div>
<div class="lbl" style="left:627.5px;top:235px;letter-spacing:-0.25px">advanced</div>

<!-- Envelope/Contour -->
<div class="gb" style="left:485px;top:277px;width:113.5px;height:66.5px"></div>
<div class="gt" style="left:492.5px;top:270px">Envelope/Contour</div>
<div class="btn" style="left:507px;top:303px;width:21px;height:22.5px"></div>
<div class="btn" style="left:553.3px;top:303px;width:22px;height:22.5px;background:#ededed;border-color:#e8e8e8;border-bottom-color:#d8d8d8"></div>
<!-- Slices -->
<div class="gb" style="left:607px;top:277px;width:61.5px;height:66.5px"></div>
<div class="gt" style="left:614.5px;top:269.5px;letter-spacing:-0.6px">Slices</div>
<div class="btn" style="left:612.5px;top:303.5px;width:22px;height:21.5px"></div>
<div class="btn" style="left:643.5px;top:303.5px;width:20px;height:20px"></div>
<svg class="abs" style="left:500px;top:300px" width="170" height="30" viewBox="500 300 170 30">
 <defs><linearGradient id="hexg" x1="0" y1="0" x2="1" y2="1"><stop offset="0" stop-color="#f4f5fc"/><stop offset="1" stop-color="#cdd3f0"/></linearGradient></defs>
 <path d="M509.2 313.4 L513.1 307.4 L519.6 307.4 L523.4 313.4 L519.6 319.4 L513.1 319.4 Z" fill="url(#hexg)" stroke="#1c3a8c" stroke-width="1.1"/>
 <rect x="522.3" y="312.2" width="2.5" height="2.5" fill="#fff" stroke="#1a3aa0" stroke-width="0.9"/>
 <rect x="517.3" y="318.3" width="2.5" height="2.5" fill="#fff" stroke="#1a3aa0" stroke-width="0.9"/>
 <path d="M564 310.6 A4.3 4.3 0 1 1 559.7 315" fill="none" stroke="#7c7c7c" stroke-width="1.9"/>
 <path d="M559.6 310.6 L564.6 307.6 L564.6 313.6 Z" fill="#7c7c7c"/>
 <!-- slice icon 1 -->
 <path d="M615.5 312.2 L620 306.5 L631 306.5 L626.5 312.2 Z" fill="#d4d4d4" stroke="#9a9a9a" stroke-width="0.6"/>
 <path d="M626.5 312.2 L631 306.5 L631 315.5 L626.5 321.2 Z" fill="#cacaca" stroke="#9a9a9a" stroke-width="0.6"/>
 <rect x="615.5" y="312.2" width="11" height="9" fill="#dadada" stroke="#9a9a9a" stroke-width="0.6"/>
 <path d="M615.5 318.5 L619.5 314 L631 313.8 L627 318.3 Z" fill="#e00000"/>
 <path d="M618 305 L618 311 M615 308 L621 308" stroke="#40b840" stroke-width="2"/>
 <!-- slice icon 2 -->
 <path d="M645.5 312.5 L650 306.5 L660.5 306.5 L656.5 312.5 Z" fill="#d4d4d4" stroke="#9a9a9a" stroke-width="0.6"/>
 <path d="M656.5 312.5 L660.5 306.5 L660.5 315.5 L656.5 320.8 Z" fill="#dca4a4" stroke="#9a9a9a" stroke-width="0.6"/>
 <rect x="645.5" y="312.5" width="11" height="8.3" fill="#d80000"/>
 <path d="M645.5 315.3 L656.5 315.3 M645.5 318.1 L656.5 318.1" stroke="#900000" stroke-width="0.7"/>
 <path d="M648 305 L648 311 M645 308 L651 308" stroke="#40b840" stroke-width="2"/>
</svg>

<!-- cube view buttons -->
<div class="btn" style="left:495px;top:352.5px;width:19px;height:19px"></div>
<div class="btn" style="left:524px;top:352.5px;width:19px;height:19px"></div>
<div class="btn" style="left:553px;top:352.5px;width:19px;height:19px"></div>
<div class="btn" style="left:582px;top:352.5px;width:19px;height:19px"></div>
<div class="btn" style="left:611px;top:352.5px;width:19px;height:19px"></div>
<div class="btn" style="left:640px;top:352.5px;width:19px;height:19px"></div>
<svg class="abs" style="left:490px;top:348px" width="175" height="28" viewBox="490 348 175 28">
 <defs><g id="cube"><path d="M0.6 3.9H11.2V13.5H0.6Z M4 0.8H14.6V10.4H4Z M0.6 3.9L4 0.8 M11.2 3.9L14.6 0.8 M11.2 13.5L14.6 10.4 M0.6 13.5L4 10.4" fill="none" stroke="#4a4a4a" stroke-width="0.75"/></g></defs>
 <g transform="translate(496 354.5)"><path d="M0.6 3.9L4 0.8V10.4L0.6 13.5Z" fill="#f59a48"/><use href="#cube"/></g>
 <g transform="translate(525 354.5)"><path d="M11.2 3.9L14.6 0.8V10.4L11.2 13.5Z" fill="#f59a48"/><use href="#cube"/></g>
 <g transform="translate(554 354.5)"><path d="M0.6 3.9H11.2V13.5H0.6Z" fill="#f59a48"/><use href="#cube"/></g>
 <g transform="translate(583 354.5)"><path d="M4 0.8H14.6V10.4H4Z" fill="#f59a48"/><use href="#cube"/></g>
 <g transform="translate(612 354.5)"><path d="M0.6 13.5L4 10.4H14.6L11.2 13.5Z" fill="#f59a48"/><use href="#cube"/></g>
 <g transform="translate(641 354.5)"><path d="M0.6 3.9L4 0.8H14.6L11.2 3.9Z" fill="#f59a48"/><use href="#cube"/></g>
</svg>

<!-- Shift box -->
<div class="gb" style="left:460px;top:388px;width:234px;height:40.5px"></div>
<div class="gt" style="left:467.5px;top:381px;letter-spacing:-0.12px">Shift box</div>
<div class="btn sb" style="left:484.8px;top:402px;width:21.5px;height:21.5px">-X</div>
<div class="btn sb" style="left:515.8px;top:402px;width:24px;height:21.5px">+X</div>
<div class="btn sb" style="left:550px;top:402px;width:21px;height:21.5px">-Y</div>
<div class="btn sb" style="left:580.8px;top:402px;width:24.3px;height:21.5px">+Y</div>
<div class="btn sb" style="left:615px;top:402px;width:21px;height:21.5px">-Z</div>
<div class="btn sb" style="left:646px;top:402px;width:23.6px;height:21.5px">+Z</div>

<svg class="abs" style="left:440px;top:185px" width="270" height="60" viewBox="440 185 270 60">
 <path d="M691.5 206.8 C690.7 206.4 688.6 205.0 686.6 204.2 C684.6 203.4 681.6 202.7 679.7 201.9 C677.8 201.1 676.7 200.0 675.2 199.2 C673.7 198.4 672.6 197.6 670.6 197.3 C668.6 197.0 665.1 197.1 663 197.3 C660.9 197.6 659.1 197.9 657.7 198.8 C656.3 199.7 655.6 201.2 654.6 202.6 C653.6 204.0 652.4 205.4 651.6 207.2 C650.8 209.0 650.0 211.0 649.7 213.3 C649.4 215.6 649.7 218.4 649.7 220.9 C649.7 223.4 649.5 226.3 649.9 228.5 C650.3 230.7 651.0 232.7 652.4 233.8 C653.8 234.9 656.1 235.7 658.4 235.3 C660.7 234.9 663.6 232.8 666 231.5 C668.4 230.2 670.9 229.1 672.9 227.7 C674.9 226.3 676.7 224.8 678.2 223.2 C679.7 221.6 680.6 219.6 682 217.9 C683.4 216.2 685.0 214.8 686.6 213.3 C688.2 211.8 690.7 209.5 691.5 208.7" fill="none" stroke="#f80808" stroke-width="4.8" stroke-linecap="round" stroke-linejoin="round"/>
 <path d="M481.5 226.6 C484 226.6 485.5 225 487.5 225 L517.5 225 C520 224.8 520.5 223.3 523 223.3 L548 223.3 C549.8 223.4 550.5 224.3 550.8 224.8" fill="none" stroke="#f80808" stroke-width="4.6" stroke-linecap="round" stroke-linejoin="round"/>
</svg>

</body></html>
